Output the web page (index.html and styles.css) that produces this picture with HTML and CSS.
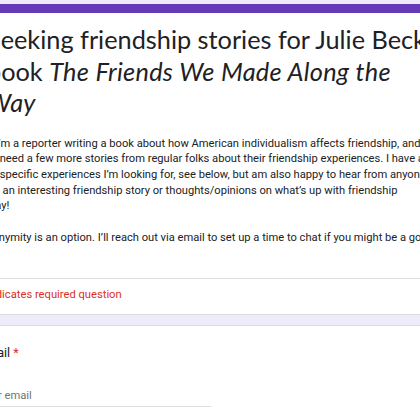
FILE: index.html
```html
<!DOCTYPE html>
<html>
<head>
<meta charset="utf-8">
<link rel="stylesheet" href="styles.css">
</head>
<body>
<div class="page">
  <div class="card header-card">
    <div class="header-main">
      <div class="title">Seeking friendship stories for Julie Beck’s<br>book <i>The Friends We Made Along the<br>Way</i></div>
      <div class="desc">
        <p>Hi! I’m a reporter writing a book about how American individualism affects friendship, and<br>so I need a few more stories from regular folks about their friendship experiences. I have a<br>few specific experiences I’m looking for, see below, but am also happy to hear from anyone<br>with an interesting friendship story or thoughts/opinions on what’s up with friendship<br>today!</p>
        <p>Anonymity is an option. I’ll reach out via email to set up a time to chat if you might be a good fit.</p>
      </div>
    </div>
    <div class="required-note">* Indicates required question</div>
  </div>
  <div class="card question-card">
    <div class="q-title">Email <span class="star">*</span></div>
    <div class="input">Your email</div>
  </div>
</div>
</body>
</html>
```
FILE: styles.css
```css
html, body {
  margin: 0;
  padding: 0;
  overflow: hidden;
  background: #f0ebf8;
}
.page {
  margin-left: -41px;
  padding-top: 4px;
  width: 520px;
  display: flex;
  flex-direction: column;
  gap: 10px;
}
.card {
  background: #fff;
  border: 1px solid #dadce0;
  border-radius: 8px;
}
.header-card {
  border-top: 9px solid #673ab7;
}
.header-main {
  padding: 11px 19px 32px 19px;
}
.title {
  font-family: "Lato", sans-serif;
  font-size: 25.3px;
  line-height: 31.5px;
  color: #202124;
  white-space: nowrap;
  margin-left: 8px;
}
.title i {
  letter-spacing: 0.3px;
}
.desc {
  margin-top: 17px;
  font-family: "Roboto", sans-serif;
  font-size: 11.15px;
  line-height: 15.7px;
  color: #202124;
  white-space: nowrap;
}
.desc p {
  margin: 0;
}
.desc p + p {
  margin-top: 16px;
}
.required-note {
  border-top: 1px solid #dadce0;
  padding: 8px 19px 12px 19px;
  font-family: "Roboto", sans-serif;
  font-size: 11.2px;
  line-height: 15.7px;
  color: #d93025;
}
.question-card {
  padding: 17px 19px 40px 19px;
}
.q-title {
  font-family: "Roboto", sans-serif;
  font-size: 12.6px;
  line-height: 19px;
  color: #202124;
}
.star {
  color: #d93025;
}
.input {
  margin-top: 26px;
  width: 232px;
  border-bottom: 1px solid #dadce0;
  font-family: "Roboto", sans-serif;
  font-size: 11.2px;
  line-height: 16px;
  padding-bottom: 2px;
  color: #70757a;
}
```
